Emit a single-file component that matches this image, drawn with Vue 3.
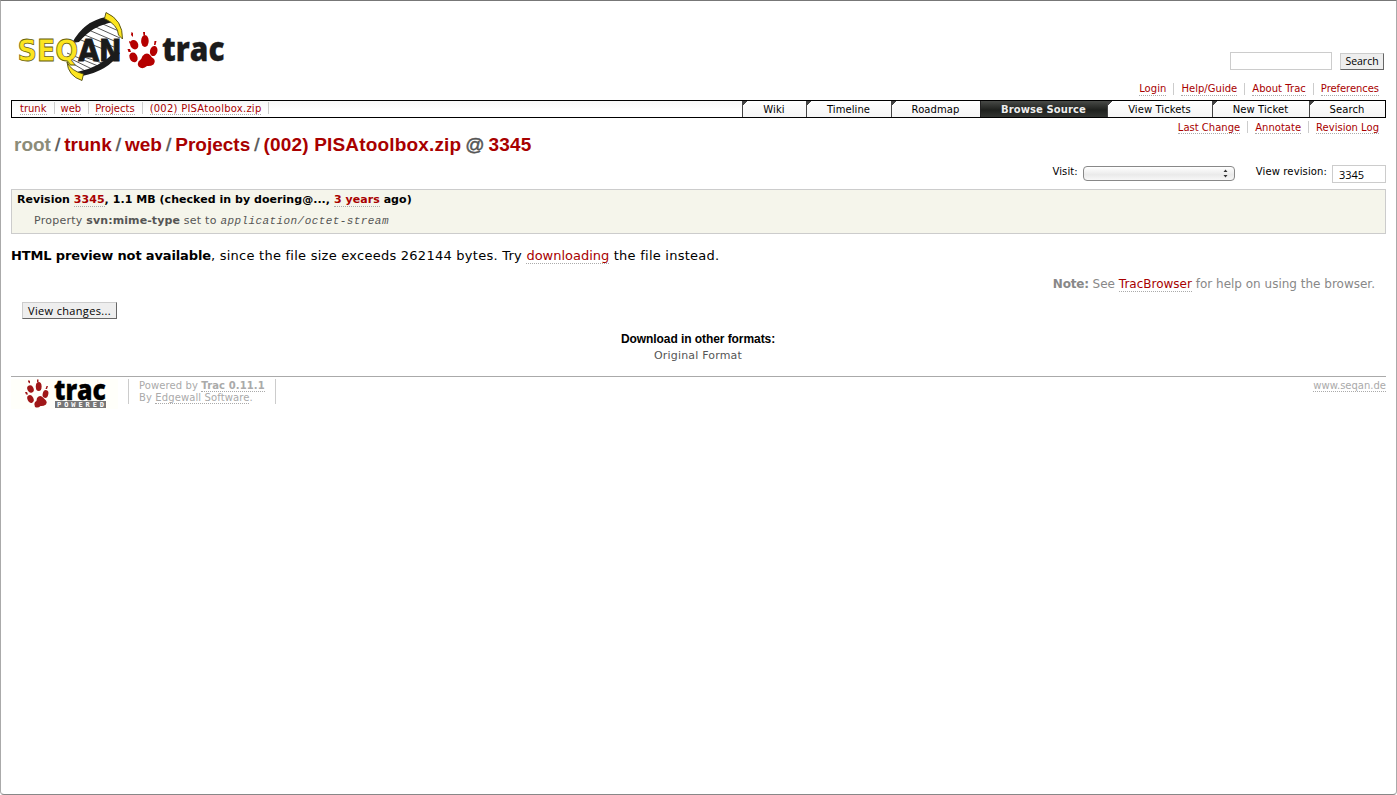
<script setup>
const crumbs = ['trunk', 'web', 'Projects', '(002) PISAtoolbox.zip']
const meta = ['Login', 'Help/Guide', 'About Trac', 'Preferences']
const tabs = ['Wiki', 'Timeline', 'Roadmap', 'Browse Source', 'View Tickets', 'New Ticket', 'Search']
const ctx = ['Last Change', 'Annotate', 'Revision Log']
const active = 'Browse Source'
</script>

<template>
  <div class="page">
    <header class="banner">
      <svg class="logo" width="212" height="76" viewBox="14 8 212 76">
        <path d="M67 62Q70 42 82 31Q94 19 107 16L121 33Q120 51 112 59Q101 69 82 76Z" fill="#fff" />
        <path d="M96 21L121 32M89 24L120 38M84 28L119 43M80 33L114 47M76 38L103 49M67 53L98 66M67 57L92 69M70 62L87 72M81 56L105 64" stroke="#444" stroke-width=".9" fill="none" />
        <path d="M72 43Q84 21 106 17L114 22Q93 25 79 42Z" fill="#1b1b1b" />
        <path d="M77 72Q99 68 116 51L120 53Q108 71 82 76Z" fill="#1b1b1b" />
        <path d="M106 12.500Q123 20 122.500 39L118.500 35Q118 25 104.500 18.500Z" fill="#fce51f" stroke="#4d4912" stroke-width=".9" />
        <path d="M67 62Q71 71 83.500 74L82 80.500Q68 76 67 62Z" fill="#fce51f" stroke="#4d4912" stroke-width=".9" />
        <text x="17.500" y="61" class="seqan" textLength="104" lengthAdjust="spacingAndGlyphs"><tspan class="yellow">SEQ</tspan><tspan class="ink">AN</tspan></text>
        <g fill="#b50000">
          <ellipse cx="134.200" cy="44.700" rx="3.900" ry="4.900" transform="rotate(-28 134.200 44.700)" />
          <ellipse cx="144.900" cy="41" rx="3.800" ry="6" />
          <ellipse cx="153.700" cy="51" rx="3.700" ry="5.200" transform="rotate(15 153.700 51)" />
          <ellipse cx="133.500" cy="57.300" rx="3.900" ry="5.100" transform="rotate(-25 133.500 57.300)" />
          <path d="M142.500 56Q147 51.500 150.500 55.500Q151.500 57.500 153.500 58.500Q156 61 153.500 64.500Q150.500 66.500 147 66Q144 69 140.500 67.800Q136.500 66 138.500 61.500Q141.500 60 142.500 56Z" />
          <path d="M131.500 32l1.500 1v4l-2-2zM143 32h2v3.500h-1.500zM154.500 41h2l-1 4h-1.500zM127.500 49h2.500l1 3h-2.500zM129 41l2.500 1v1.500h-2z" />
        </g>
        <text x="162" y="61" class="wordmark" textLength="62.500" lengthAdjust="spacingAndGlyphs">trac</text>
      </svg>
      <form class="search" @submit.prevent>
        <input type="text" class="search-box" aria-label="Search" />
        <button class="btn search-btn">Search</button>
      </form>
      <nav class="links metanav"><span v-for="m in meta" :key="m"><a>{{ m }}</a></span></nav>
    </header>

    <nav class="mainnav">
      <div class="links crumbs"><span v-for="c in crumbs" :key="c"><a>{{ c }}</a></span></div>
      <div class="tabs">
        <div v-for="t in tabs" :key="t" class="tab" :class="{ active: t === active }"><span>{{ t }}</span></div>
      </div>
    </nav>

    <div class="title-row">
      <h1><a class="root">root</a><i>/</i><a>trunk</a><i>/</i><a>web</a><i>/</i><a>Projects</a><i>/</i><a class="file">(002) PISAtoolbox.zip</a><i class="at">@</i><a class="file">3345</a></h1>
      <nav class="links ctxnav"><span v-for="c in ctx" :key="c"><a>{{ c }}</a></span></nav>
    </div>

    <div class="jump">
      <label>Visit:</label>
      <div class="select"><svg width="5" height="9" viewBox="0 0 5 9"><path d="M.500 3L2.500 .500L4.500 3ZM.500 6H4.500L2.500 8.500Z" fill="#333" /></svg></div>
      <label class="rev-label">View revision:</label>
      <div class="rev">3345</div>
    </div>

    <section class="info">
      <div class="info-head">Revision <a>3345</a>, 1.1 MB (checked in by doering@..., <a>3 years</a> ago)</div>
      <div class="info-prop">Property <b>svn:mime-type</b> set to <code>application/octet-stream</code></div>
    </section>

    <p class="preview"><strong>HTML preview not available</strong>, since the file size exceeds 262144 bytes. Try <a>downloading</a> the file instead.</p>
    <p class="note"><b>Note:</b> See <a>TracBrowser</a> for help on using the browser.</p>
    <button class="btn changes">View changes...</button>

    <section class="formats">
      <h3>Download in other formats:</h3>
      <div>Original Format</div>
    </section>

    <footer>
      <svg class="powered" width="107" height="30" viewBox="11 379 107 30">
        <rect x="11" y="379" width="107" height="30" fill="#fffffa" />
        <g fill="#a01717">
          <ellipse cx="30.500" cy="389" rx="3.100" ry="3.800" transform="rotate(-25 30.500 389)" />
          <ellipse cx="38.700" cy="386.500" rx="2.900" ry="4.500" />
          <ellipse cx="45.500" cy="394" rx="2.800" ry="4" transform="rotate(15 45.500 394)" />
          <ellipse cx="30.500" cy="399" rx="3" ry="4" transform="rotate(-25 30.500 399)" />
          <path d="M37 398Q40 394 43.500 398L46 400.500Q47.500 402 46 404.500Q43 406.500 40.500 406Q38 408.500 35 407Q33.500 404 35 402Q37 401 37 398Z" />
          <path d="M28.500 380l1.500 1v2.500l-2-1.500zM37 379.500h1.500v2.500H37zM46.500 386h1.500l-1 3h-1.500zM25 392h2l1 2.500h-2z" />
        </g>
        <text x="54" y="400" class="wordmark small" textLength="52" lengthAdjust="spacingAndGlyphs">trac</text>
        <rect x="55" y="401" width="51" height="7" fill="#777" />
        <text x="57" y="407" class="pow" textLength="47">POWERED</text>
      </svg>
      <div class="credit">Powered by <a><b>Trac 0.11.1</b></a><br />By <a>Edgewall Software</a>.</div>
      <div class="site"><a>www.seqan.de</a></div>
    </footer>
  </div>
</template>

<style>
body { margin: 0; background: #fff; }
</style>

<style scoped>
* { box-sizing: border-box; }
.page { width: 1397px; height: 795px; padding: 0 10px; border: 1px solid #aaa; border-top-color: #777; border-bottom-color: #888; border-radius: 0 0 4px 4px; font: 10px/13px 'DejaVu Sans', sans-serif; color: #000; overflow: hidden; }
a { color: #a80000; border-bottom: 1px dotted #aaa; }
.banner { height: 99px; display: grid; grid-template-columns: 1fr auto; grid-template-rows: 80px 19px; }
.logo { margin: 7px 0 0 3px; grid-row: 1 / 3; }
.seqan { font: bold 30px 'DejaVu Sans', sans-serif; }
.yellow { fill: #fce51f; stroke: #67610f; stroke-width: .8px; }
.ink { fill: #1b1b1b; stroke: #1b1b1b; stroke-width: 1px; }
.wordmark { font: 800 33px 'Open Sans', sans-serif; fill: #1b1b1b; stroke: #1b1b1b; stroke-width: .3px; }
.wordmark.small { font-size: 28px; fill: #000; stroke: #000; }
.pow { font: bold 7px 'DejaVu Sans Mono', monospace; fill: #fff; }
.search { display: flex; align-items: flex-start; gap: 8px; padding: 51px 2px 0 0; justify-content: flex-end; }
.search-box { width: 102px; height: 18px; padding: 0; border: 1px solid #ccc; background: #fff; }
.btn { height: 17px; padding: 0; border: 1px solid #ccc; border-right-color: #666; border-bottom-color: #666; background: #eee; color: #000; font: 11px/14px 'Open Sans', sans-serif; letter-spacing: .33px; }
.search-btn { width: 44px; margin-top: 1px; font-size: 10.500px; line-height: 12px; letter-spacing: 0; padding-bottom: 2px; }
.links { display: flex; white-space: nowrap; letter-spacing: .04px; }
.links span { padding: 0 7px; border-left: 1px solid #ccc; height: 12px; line-height: 12px; }
.links a { display: block; height: 13px; }
.metanav { padding-top: 2px; justify-content: flex-end; }
.metanav span:last-child { letter-spacing: -.06px; }
.metanav span:first-child, .ctxnav span:first-child { border-left: 0; }
.mainnav { height: 18px; border: 1px solid #000; display: flex; justify-content: space-between; background: linear-gradient(#f7f7f7, #fff 60%); }
.crumbs { padding-top: 1px; letter-spacing: 0; }
.crumbs span { border-left: 0; border-right: 1px solid #ccc; padding: 0 7px 0 6px; }
.crumbs a { line-height: 14px; }
.crumbs span:first-child { padding-left: 8px; }
.crumbs span:last-child { letter-spacing: .24px; padding-left: 7px; }
.tabs { display: grid; grid-template-columns: 64px 85px 89px 127px 105px 97px 76px; grid-template-rows: 16px; height: 16px; }
.tab { border-left: 1px solid #444; padding-right: 1px; text-align: center; line-height: 17px; letter-spacing: .08px; background: linear-gradient(135deg, #444 0 3px, transparent 3px), linear-gradient(#fff, #f5f5f5); }
.tab.active { background: linear-gradient(#484a47, #1f211e 55%, #323431); color: #eee; font-weight: bold; border-color: #222; }
.title-row { display: flex; justify-content: space-between; height: 47px; }
h1 { margin: 15px 0 0 3px; font: bold 19px/23px 'Liberation Sans', Arial, sans-serif; white-space: nowrap; }
h1 a { border: 0; }
h1 .root { color: #8c8c78; }
h1 .file { letter-spacing: .17px; }
h1 i { color: #555; font-style: normal; margin: 0 4px 0 4px; font-weight: normal; -webkit-text-stroke: .4px #555; }
h1 i.at { margin: 0 4px; -webkit-text-stroke: .5px #555; }
.ctxnav { padding-top: 3px; letter-spacing: .01px; }
.ctxnav a { line-height: 14px; }
.jump { display: flex; justify-content: flex-end; height: 24px; align-items: flex-start; }
.jump label { line-height: 14px; letter-spacing: .12px; }
.select { width: 152px; height: 15px; margin: 1px 21px 0 5px; border: 1px solid #888; border-radius: 4px; background: linear-gradient(#fff, #eaeaea 60%, #f7f7f7); display: flex; justify-content: flex-end; align-items: center; padding-right: 6px; }
.rev { width: 54px; height: 18px; margin-left: 5px; border: 1px solid #ccc; padding-left: 6px; font: 11px/17px 'Open Sans', sans-serif; }
.info { height: 45px; padding: 2px 5px; border: 1px solid #ccc; background: #f5f5eb; white-space: nowrap; }
.info-head { font-weight: bold; font-size: 11px; line-height: 15px; letter-spacing: .045px; }
.info-prop { margin: 7px 0 0 17px; font-size: 11px; line-height: 13px; color: #555; letter-spacing: .25px; }
.info-prop b { letter-spacing: .1px; }
.info-prop code { font: italic 11px/12px 'Liberation Mono', monospace; letter-spacing: .42px; }
.preview { margin: 13px 0 0; font-size: 13px; line-height: 17px; height: 17px; white-space: nowrap; letter-spacing: .25px; }
.preview strong { letter-spacing: -.14px; }
.preview a { letter-spacing: 0; }
.note { margin: 13px 11px 0 0; height: 15px; text-align: right; font-size: 12px; line-height: 15px; color: #888; }
.note b { letter-spacing: -.2px; }
.changes { display: block; margin: 10px 0 0 11px; width: 95px; }
.formats { height: 57px; padding-top: 12px; text-align: center; font-size: 11px; line-height: 15px; color: #555; letter-spacing: .18px; }
.formats > * { margin-right: 1px; }
.formats h3 { height: 17px; font: bold 12px/17px 'Liberation Sans', Arial, sans-serif; color: #000; letter-spacing: -.07px; margin-top: 0; margin-bottom: 0; }
footer { border-top: 1px solid #aaa; display: flex; align-items: flex-start; padding-top: 2px; color: #aaa; }
footer a { color: #aaa; }
.powered { flex: none; }
.powered, .logo { overflow: visible; }
.credit { height: 25px; padding-top: 1px; margin-left: 10px; padding-left: 10px; padding-right: 10px; border: solid #ccc; border-width: 0 1px; line-height: 12px; white-space: nowrap; letter-spacing: .11px; }
.site { margin-left: auto; line-height: 12px; padding-top: 1px; }
</style>
